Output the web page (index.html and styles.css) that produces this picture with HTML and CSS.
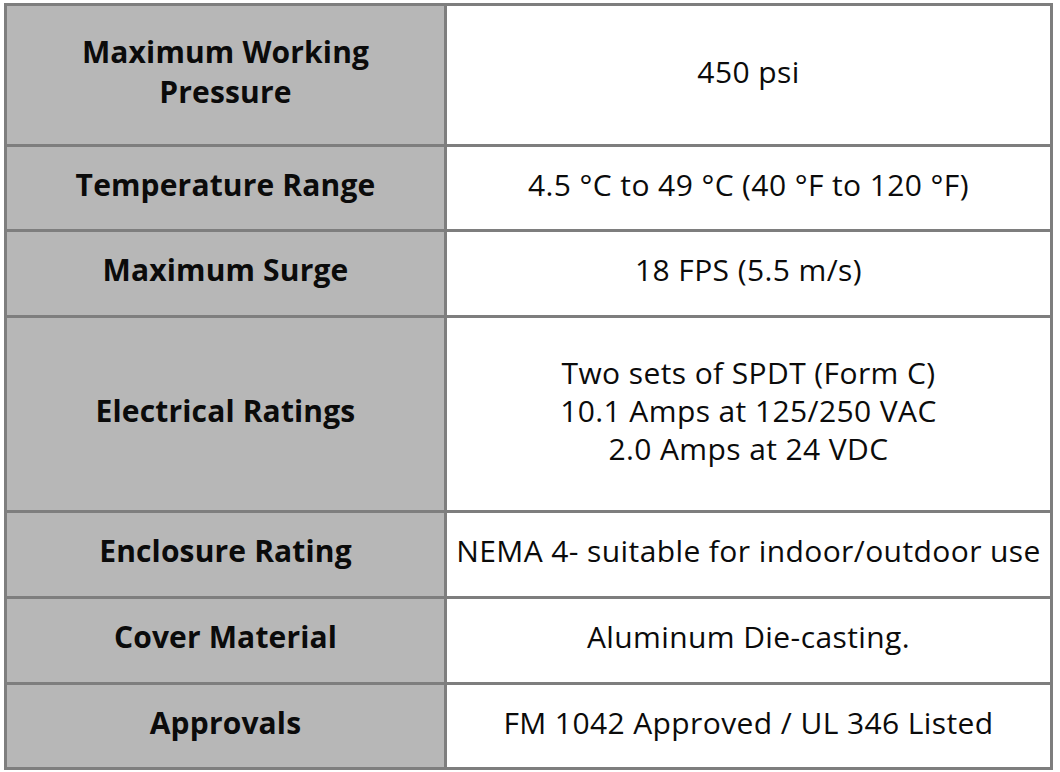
FILE: index.html
```html
<!DOCTYPE html>
<html lang="en">
<head>
<meta charset="utf-8">
<title>Specifications</title>
<link rel="stylesheet" href="styles.css">
</head>
<body>
<table class="spec">
  <tbody>
    <tr class="row-tall">
      <th>Maximum Working<br>Pressure</th>
      <td>450 psi</td>
    </tr>
    <tr class="row-a">
      <th>Temperature Range</th>
      <td>4.5 °C to 49 °C (40 °F to 120 °F)</td>
    </tr>
    <tr class="row-b">
      <th>Maximum Surge</th>
      <td>18 FPS (5.5 m/s)</td>
    </tr>
    <tr class="row-xl">
      <th>Electrical Ratings</th>
      <td>Two sets of SPDT (Form C)<br>10.1 Amps at 125/250 VAC<br>2.0 Amps at 24 VDC</td>
    </tr>
    <tr class="row-b">
      <th>Enclosure Rating</th>
      <td>NEMA 4- suitable for indoor/outdoor use</td>
    </tr>
    <tr class="row-b">
      <th>Cover Material</th>
      <td>Aluminum Die-casting.</td>
    </tr>
    <tr class="row-a">
      <th>Approvals</th>
      <td>FM 1042 Approved / UL 346 Listed</td>
    </tr>
  </tbody>
</table>
</body>
</html>
```

FILE: styles.css
```css
html, body {
  margin: 0;
  padding: 0;
  background: #ffffff;
}

body {
  padding: 3px 0 0 4px;
  font-family: "Open Sans", "DejaVu Sans", sans-serif;
  color: #0b0b0b;
}

.spec {
  border-collapse: separate;
  border-spacing: 0;
  border-top: 3px solid #7e7e7e;
  border-left: 3px solid #7e7e7e;
  width: 1049px;
  table-layout: fixed;
}

.spec th,
.spec td {
  border-right: 3px solid #7e7e7e;
  border-bottom: 3px solid #7e7e7e;
  text-align: center;
  vertical-align: middle;
  padding: 0 2px 7px;
  font-size: 30px;
  line-height: 38px;
  white-space: nowrap;
}

.spec th {
  width: 433px;
  background: #b7b7b7;
  font-weight: 700;
  line-height: 40px;
  letter-spacing: 0.15px;
}

.spec td {
  font-weight: 400;
  background: #ffffff;
  letter-spacing: 0.4px;
}

.row-tall th,
.row-tall td {
  height: 131px;
}

.row-a th,
.row-a td {
  height: 75px;
}

.row-b th,
.row-b td {
  height: 76px;
}

.row-xl th,
.row-xl td {
  height: 185px;
}
```
